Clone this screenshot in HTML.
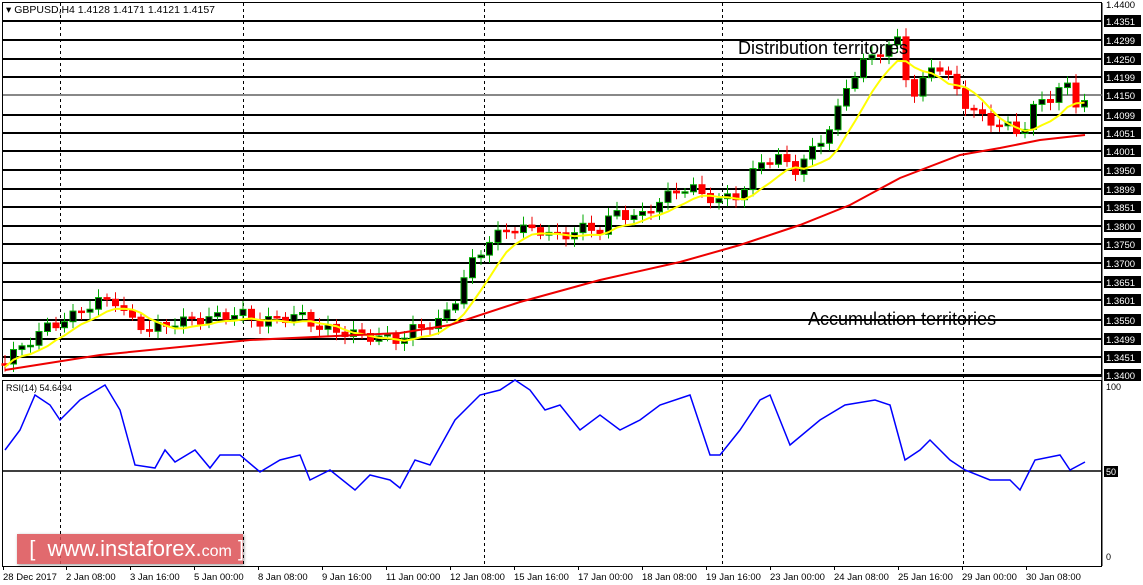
<!DOCTYPE html>
<html><head><meta charset="utf-8"><style>
body{margin:0;width:1143px;height:585px;background:#fff;overflow:hidden;font-family:"Liberation Sans",sans-serif;position:relative}
svg{position:absolute;left:0;top:0}
.logo{position:absolute;left:17px;top:534px;width:226px;height:30px;background:rgba(220,80,85,0.85);box-shadow:1px 1px 3px rgba(0,0,0,.4);color:#fff;font-size:22px;line-height:30px;white-space:nowrap}
</style></head><body>
<svg id="s" width="1143" height="585" xmlns="http://www.w3.org/2000/svg" font-family="Liberation Sans, sans-serif">
<rect x="2.5" y="2.5" width="1099" height="374" fill="none" stroke="#000"/>
<rect x="2.5" y="380.5" width="1099" height="186" fill="none" stroke="#000"/>
<g id="g"></g>
<text x="6" y="13" font-size="10.5" fill="#000">▾ GBPUSD,H4  1.4128 1.4171 1.4121 1.4157</text>
<text x="6" y="391" font-size="9" fill="#000">RSI(14) 54.6494</text>
<text x="738" y="54" font-size="18" fill="#000">Distribution territories</text>
<text x="808" y="325" font-size="18" fill="#000">Accumulation territories</text>
</svg>
<div class="logo">&nbsp;&nbsp;[&nbsp; www.instaforex.<span style="font-size:16px">com</span> ]</div>
<script>
var g=document.getElementById('g'),h='';
function L(a,b,c,d,st,w,da){h+='<line x1="'+a+'" y1="'+b+'" x2="'+c+'" y2="'+d+'" stroke="'+st+'" stroke-width="'+w+'"'+(da?' stroke-dasharray="'+da+'"':'')+'/>';}
[60,243,484,722,963].forEach(function(x){L(x+.5,3,x+.5,566,'#000',1,'3,3');});
var lv=[[21,'1.4351'],[40,'1.4299'],[59,'1.4250'],[77,'1.4199'],[95,'1.4150'],[115,'1.4099'],[133,'1.4051'],[151,'1.4001'],[170,'1.3950'],[189,'1.3899'],[207,'1.3851'],[226,'1.3800'],[244,'1.3750'],[263,'1.3700'],[282,'1.3651'],[300,'1.3601'],[320,'1.3550'],[339,'1.3499'],[357,'1.3451'],[375,'1.3400']];
lv.forEach(function(v){L(3,v[0],1102,v[0],v[0]==95?'#888':'#000',2);h+='<rect x="1104" y="'+(v[0]-6)+'" width="37" height="12" fill="#000"/><text x="1106" y="'+(v[0]+4)+'" font-size="9.5" fill="#fff">'+v[1]+'</text>';});
L(1102,3,1102,566,'#000',1);
h+='<text x="1106" y="8" font-size="9.5">1.4400</text><text x="1106" y="390" font-size="9">100</text><text x="1106" y="560" font-size="9">0</text>';
h+='<rect x="1104" y="466" width="14" height="11" fill="#000"/><text x="1106" y="475" font-size="9" fill="#fff">50</text>';
L(3,471,1102,471,'#000',1.5);
var tl=[[3,'28 Dec 2017'],[66,'2 Jan 08:00'],[130,'3 Jan 16:00'],[194,'5 Jan 00:00'],[258,'8 Jan 08:00'],[322,'9 Jan 16:00'],[386,'11 Jan 00:00'],[450,'12 Jan 08:00'],[514,'15 Jan 16:00'],[578,'17 Jan 00:00'],[642,'18 Jan 08:00'],[706,'19 Jan 16:00'],[770,'23 Jan 00:00'],[834,'24 Jan 08:00'],[898,'25 Jan 16:00'],[962,'29 Jan 00:00'],[1026,'30 Jan 08:00']];
tl.forEach(function(t){L(t[0]+0.5,566,t[0]+0.5,570,'#000',1);h+='<text x="'+t[0]+'" y="580" font-size="9.5">'+t[1]+'</text>';});
var P=[[5,360],[25,345],[45,328],[70,318],[95,302],[115,300],[130,320],[150,330],[175,322],[210,318],[240,313],[260,322],[300,315],[320,328],[360,335],[400,340],[415,328],[440,322],[455,300],[470,265],[490,240],[510,228],[540,230],[560,238],[580,228],[600,230],[615,212],[640,218],[660,200],[690,185],[700,195],[720,200],[740,195],[760,162],[780,158],[795,170],[815,148],[835,120],[845,90],[860,65],[875,55],[890,45],[900,40],[910,100],[925,80],[935,60],[950,80],[965,103],[985,120],[1005,125],[1020,135],[1035,105],[1050,98],[1065,82],[1075,104],[1085,98]];
function at(x){for(var i=1;i<P.length;i++)if(x<=P[i][0]){var a=P[i-1],b=P[i];return a[1]+(b[1]-a[1])*(x-a[0])/(b[0]-a[0]);}return P[P.length-1][1];}
var prev=at(0),cl=[];
for(var x=5;x<=1085;x+=8.5){var c=at(x)+Math.sin(x*1.7)*5,o=prev;var hi=Math.min(o,c)-3-Math.abs(Math.sin(x))*6,lo=Math.max(o,c)+3+Math.abs(Math.cos(x*0.7))*5;
var up=c<o;L(x,hi,x,lo,up?'#0a0':'#e00',1);var bt=Math.min(o,c),ht=Math.max(1.5,Math.abs(c-o));
h+='<rect x="'+(x-3)+'" y="'+bt+'" width="6" height="'+ht+'" fill="'+(up?'#000':'#f00')+'" stroke="'+(up?'#0a0':'#f00')+'" stroke-width="1"/>';prev=c;cl.push([x,c]);}
function ma(n){var s='';for(var i=0;i<cl.length;i++){var a=0,k=0;for(var j=Math.max(0,i-n+1);j<=i;j++){a+=cl[j][1];k++;}s+=cl[i][0]+','+(a/k+(cl[i][0]>800?6:3))+' ';}return s;}
h+='<polyline points="'+ma(6)+'" fill="none" stroke="#ff0" stroke-width="2"/>';
var red=[[5,370],[100,355],[250,340],[400,333],[450,325],[520,302],[600,280],[680,262],[740,245],[800,225],[850,205],[900,178],[960,155],[1000,148],[1040,140],[1085,135]];
h+='<polyline points="'+red.map(function(p){return p.join(',')}).join(' ')+'" fill="none" stroke="#e00" stroke-width="2"/>';
var R=[[5,450],[20,430],[35,395],[50,405],[60,420],[80,400],[105,385],[120,410],[135,465],[155,468],[165,450],[175,462],[195,450],[210,468],[220,455],[240,455],[260,472],[280,460],[300,455],[310,480],[330,470],[355,490],[370,475],[390,480],[400,488],[415,460],[430,465],[455,420],[480,395],[500,390],[515,380],[530,390],[545,410],[560,405],[580,430],[600,415],[620,430],[640,420],[660,405],[690,395],[710,455],[720,455],[740,430],[760,400],[770,395],[790,445],[820,420],[845,405],[875,400],[890,405],[905,460],[920,450],[930,440],[950,460],[965,470],[990,480],[1010,480],[1020,490],[1035,460],[1060,455],[1070,470],[1085,462]];
h+='<polyline points="'+R.map(function(p){return p.join(',')}).join(' ')+'" fill="none" stroke="#00f" stroke-width="1.5"/>';
g.innerHTML=h;
</script>
</body></html>
